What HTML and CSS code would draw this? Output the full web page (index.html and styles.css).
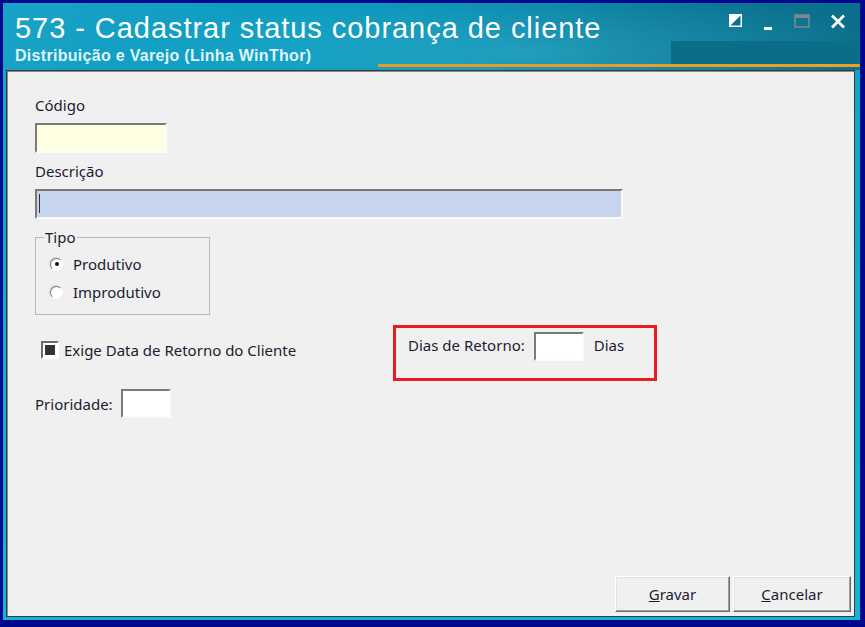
FILE: index.html
```html
<!DOCTYPE html>
<html lang="pt-BR">
<head>
    <meta charset="UTF-8">
    <title>573 - Cadastrar status cobrança de cliente</title>
    <link rel="stylesheet" href="styles.css">
</head>
<body>
    <!-- Janela principal -->
    <div class="window">
        <div class="titlebar">
            <div class="caption">
                <h1>573 - Cadastrar status cobrança de cliente</h1>
                <p class="subtitle">Distribuição e Varejo (Linha WinThor)</p>
            </div>
            <div class="controls">
                <svg class="ctl" width="13" height="13" viewBox="0 0 13 13">
                    <rect x="0" y="0" width="13" height="13" fill="#fff"/>
                    <polygon points="11.5,1.5 11.5,11.5 1.5,11.5" fill="#0b6f8a"/>
                </svg>
                <svg class="ctl" width="12" height="16" viewBox="0 0 12 16">
                    <rect x="2" y="13" width="8" height="3" fill="#fff"/>
                </svg>
                <svg class="ctl" width="16" height="14" viewBox="0 0 16 14">
                    <rect x="1" y="1" width="14" height="12" fill="none" stroke="#7d8a90" stroke-width="1.5"/>
                    <rect x="1" y="1" width="14" height="3" fill="#7d8a90"/>
                </svg>
                <svg class="ctl" width="16" height="15" viewBox="0 0 16 15">
                    <path d="M2 1.5 L14 13.5 M14 1.5 L2 13.5" stroke="#fff" stroke-width="2.8"/>
                </svg>
            </div>
        </div>

        <div class="panel">
            <label class="lbl">Código</label>
            <div class="edit edit-code"></div>

            <label class="lbl lbl-desc">Descrição</label>
            <div class="edit edit-desc"><span class="caret"></span></div>

            <!-- Tipo -->
            <fieldset class="group">
                <legend>Tipo</legend>
                <div class="radio checked"><span class="dot"></span>Produtivo</div>
                <div class="radio"><span class="dot"></span>Improdutivo</div>
            </fieldset>

            <div class="row">
                <div class="check"><span class="box"></span>Exige Data de Retorno do Cliente</div>
                <div class="highlight">
                    <span>Dias de Retorno:</span>
                    <div class="edit edit-small"></div>
                    <span class="unit">Dias</span>
                </div>
            </div>

            <div class="prio">
                <span>Prioridade:</span>
                <div class="edit edit-small"></div>
            </div>

            <div class="actions">
                <button class="btn btn-save"><u>G</u>ravar</button>
                <button class="btn btn-cancel"><u>C</u>ancelar</button>
            </div>
        </div>
    </div>
</body>
</html>
```

FILE: styles.css
```css
* {
    margin: 0;
    padding: 0;
    box-sizing: border-box;
}

body {
    width: 865px;
    height: 627px;
    background: #00088f;
    padding: 3px 5px 7px 3px;
    font-family: 'Noto Sans', sans-serif;
    font-size: 15px;
    color: #1c1c30;
    overflow: hidden;
}

/* Janela */
.window {
    height: 100%;
    display: flex;
    flex-direction: column;
    background: linear-gradient(180deg, #0aa6c8, #12b6d4);
}

.titlebar {
    position: relative;
    height: 67px;
    display: flex;
    justify-content: space-between;
    background:
        radial-gradient(ellipse 380px 60px at 520px 50px, rgba(80, 200, 225, 0.35), transparent),
        linear-gradient(100deg, #18a2c6 0%, #0c9cc0 35%, #0a8db0 55%, #0a7a98 75%, #0b6d89 100%);
}

/* bloco escuro e faixa laranja */
.titlebar::before {
    content: "";
    position: absolute;
    left: 668px;
    top: 38px;
    width: 187px;
    height: 24px;
    background: #0a6e88;
}

.titlebar::after {
    content: "";
    position: absolute;
    left: 375px;
    right: 0;
    top: 61px;
    height: 3px;
    background: linear-gradient(90deg, #e49a2a, #f0a020);
}

.caption {
    padding: 11px 0 0 12px;
    color: #fff;
}

.caption h1 {
    font-family: 'Liberation Sans', Arial, sans-serif;
    font-weight: normal;
    font-size: 29px;
    line-height: 29px;
    letter-spacing: 0.95px;
}

.subtitle {
    font-family: 'Liberation Sans', Arial, sans-serif;
    font-weight: bold;
    font-size: 16px;
    line-height: 18px;
    letter-spacing: 0.3px;
    margin-top: 4px;
    color: #dff4fa;
}

.controls {
    position: relative;
    z-index: 1;
    display: flex;
    align-items: flex-start;
    gap: 20px;
    padding: 11px 14px 0 0;
}

.ctl {
    display: block;
}

/* Area do formulario */
.panel {
    flex: 1;
    margin: 0 5px 3px 3px;
    background: #f0f0f0;
    border: 1px solid #3a3a3a;
    box-shadow: inset 1px 1px 0 #8a8a8a;
    padding: 25px 3px 3px 28px;
    display: flex;
    flex-direction: column;
    align-items: flex-start;
}

.lbl {
    display: block;
    line-height: 18px;
}

.lbl-desc {
    margin-top: 9px;
}

.edit {
    border: 2px solid;
    border-color: #7a7a7a #fbfbfb #fbfbfb #7a7a7a;
    background: #fff;
}

.edit-code {
    width: 132px;
    height: 30px;
    margin-top: 9px;
    background: #fefee1;
}

.edit-desc {
    width: 588px;
    height: 30px;
    margin-top: 9px;
    background: #c7d4ee;
    padding: 3px 0 0 2px;
}

.caret {
    display: block;
    width: 1px;
    height: 19px;
    background: #333;
}

.edit-small {
    width: 50px;
    height: 29px;
}

/* Grupo Tipo */
.group {
    width: 175px;
    height: 85px;
    margin-top: 11px;
    border: 1px solid #b8b8b8;
    padding: 5px 0 0 14px;
}

.group legend {
    padding: 0 1px;
    margin-left: -6px;
    line-height: 15px;
}

.radio {
    display: flex;
    align-items: center;
    gap: 10px;
    height: 28px;
}

.dot {
    width: 13px;
    height: 13px;
    border-radius: 50%;
    border: 1px solid;
    border-color: #7f7f7f #fff #fff #7f7f7f;
    background: #fff;
    box-shadow: -1px -1px 0 #d4d4d4;
    display: flex;
    align-items: center;
    justify-content: center;
}

.radio.checked .dot::after {
    content: "";
    width: 4px;
    height: 4px;
    border-radius: 50%;
    background: #111;
}

/* Linha do checkbox */
.row {
    display: flex;
    align-items: flex-start;
    margin-top: 10px;
}

.check {
    display: flex;
    align-items: center;
    gap: 5px;
    margin: 15px 0 0 6px;
    width: 352px;
}

.box {
    width: 18px;
    height: 18px;
    border: 2px solid;
    border-color: #6c6c6c #fff #fff #6c6c6c;
    background: #fff;
    padding: 2px;
}

.box::after {
    content: "";
    display: block;
    width: 10px;
    height: 10px;
    background: #333;
}

.highlight {
    width: 264px;
    height: 56px;
    border: 3px solid #e91c24;
    display: flex;
    align-items: flex-start;
    padding: 4px 0 0 12px;
    gap: 9px;
}

.highlight span {
    line-height: 26px;
}

.highlight .unit {
    margin-left: 1px;
}

.prio {
    display: flex;
    align-items: center;
    gap: 8px;
    margin-top: 8px;
}

/* Botoes */
.actions {
    margin-top: auto;
    margin-bottom: 1px;
    align-self: flex-end;
    display: flex;
    gap: 3px;
}

.btn {
    height: 36px;
    font-family: 'Noto Sans', sans-serif;
    font-size: 15px;
    color: #1c1c30;
    background: #f0f0f0;
    border: 1px solid;
    border-color: #fff #6a6a6a #6a6a6a #fff;
    box-shadow: inset -1px -1px 0 #a0a0a0, inset 1px 1px 0 #e3e3e3;
}

.btn-save {
    width: 115px;
}

.btn-cancel {
    width: 118px;
}
```
